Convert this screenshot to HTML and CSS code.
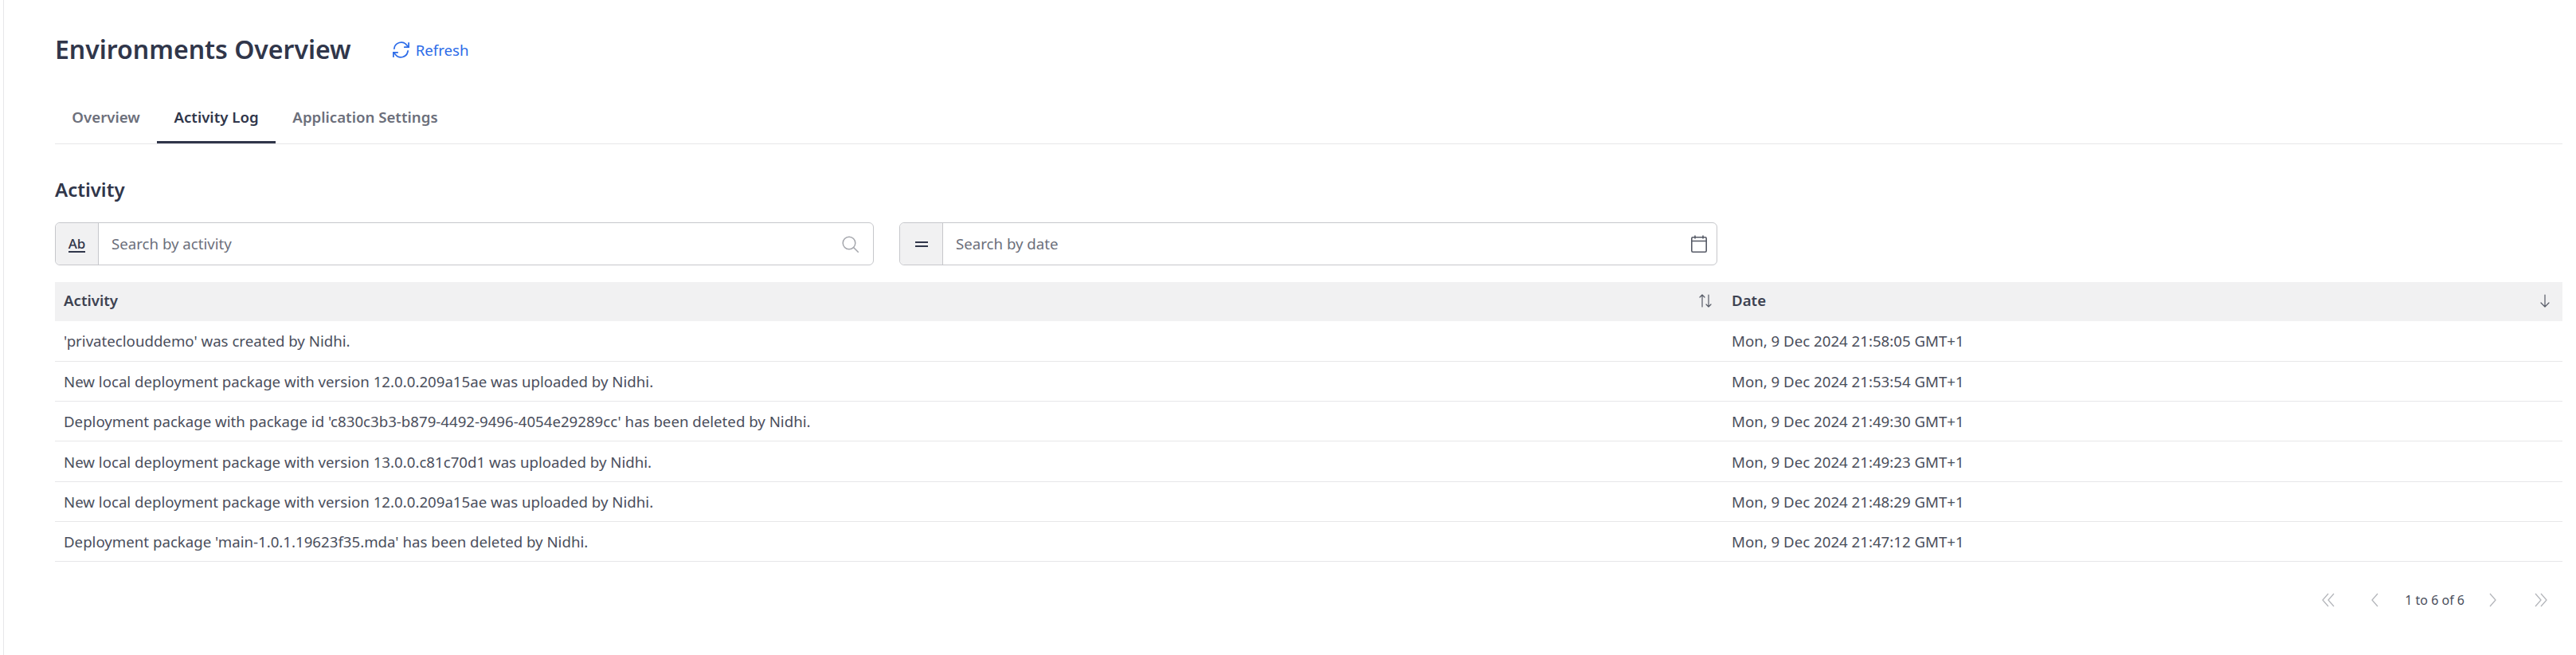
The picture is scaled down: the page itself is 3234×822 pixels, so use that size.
FILE: index.html
```html
<!DOCTYPE html>
<html>
<head>
    <title>Environments Overview</title>
    <link rel="stylesheet" href="styles.css">
</head>
<body>
    <div class="page">
        <div class="page-header">
            <h1>Environments Overview</h1>
            <a class="refresh">
                <svg width="23" height="23" viewBox="0 0 24 24" fill="none" stroke="#2b6be8" stroke-width="1.8" stroke-linecap="round" stroke-linejoin="round"><path d="M3 10.5A9.2 9.2 0 0 1 19.5 6L22 8.5"/><path d="M22 3v5.5h-5.5"/><path d="M21 13.5A9.2 9.2 0 0 1 4.5 18L2 15.5"/><path d="M2 21v-5.5h5.500"/></svg>
                Refresh
            </a>
        </div>

        <div class="tabs">
            <a class="tab">Overview</a>
            <a class="tab active">Activity Log</a>
            <a class="tab">Application Settings</a>
        </div>

        <h2>Activity</h2>

        <div class="filters">
            <div class="filter">
                <div class="filter-type"><span class="ab">Ab</span></div>
                <div class="filter-input">Search by activity</div>
                <svg class="search-icon" width="21" height="21" viewBox="0 0 21 21" fill="none" stroke="#a4a6ac" stroke-width="1.5" stroke-linecap="round"><circle cx="9" cy="9" r="7.800"/><path d="M14.500 14.500l5.800 5.800"/></svg>
            </div>
            <div class="filter date-filter">
                <div class="filter-type"><span class="equals"></span></div>
                <div class="filter-input">Search by date</div>
                <svg class="calendar-icon" width="20" height="22" viewBox="0 0 20 22" fill="none" stroke="#565a66" stroke-width="1.600"><rect x="0.800" y="2.800" width="18.400" height="18.400" rx="1.500"/><path d="M0.800 7.500h18.400M5 0.500v4M15 0.500v4"/></svg>
            </div>
        </div>

        <table class="log">
            <thead>
                <tr>
                    <th>
                        <div class="th-inner">Activity
                            <svg class="sort-icon" width="16" height="17" viewBox="0 0 16 17" fill="none" stroke="#565a66" stroke-width="1.200" stroke-linecap="round" stroke-linejoin="round"><path d="M4 16V1M1 4l3-3 3 3"/><path d="M12 1v15M9 13l3 3 3-3"/></svg>
                        </div>
                    </th>
                    <th>
                        <div class="th-inner">Date
                            <svg class="sort-icon down" width="12" height="17" viewBox="0 0 12 17" fill="none" stroke="#565a66" stroke-width="1.200" stroke-linecap="round" stroke-linejoin="round"><path d="M6 1v15M1 11l5 5 5-5"/></svg>
                        </div>
                    </th>
                </tr>
            </thead>
            <tbody>
                <tr><td>'privateclouddemo' was created by Nidhi.</td><td>Mon, 9 Dec 2024 21:58:05 GMT+1</td></tr>
                <tr><td>New local deployment package with version 12.0.0.209a15ae was uploaded by Nidhi.</td><td>Mon, 9 Dec 2024 21:53:54 GMT+1</td></tr>
                <tr><td>Deployment package with package id 'c830c3b3-b879-4492-9496-4054e29289cc' has been deleted by Nidhi.</td><td>Mon, 9 Dec 2024 21:49:30 GMT+1</td></tr>
                <tr><td>New local deployment package with version 13.0.0.c81c70d1 was uploaded by Nidhi.</td><td>Mon, 9 Dec 2024 21:49:23 GMT+1</td></tr>
                <tr><td>New local deployment package with version 12.0.0.209a15ae was uploaded by Nidhi.</td><td>Mon, 9 Dec 2024 21:48:29 GMT+1</td></tr>
                <tr><td>Deployment package 'main-1.0.1.19623f35.mda' has been deleted by Nidhi.</td><td>Mon, 9 Dec 2024 21:47:12 GMT+1</td></tr>
            </tbody>
        </table>

        <div class="pagination">
            <svg width="16" height="18" viewBox="0 0 16 18" fill="none" stroke="#b4b6bb" stroke-width="1.300"><path d="M8 1L1 9l7 8M15 1L8 9l7 8"/></svg>
            <svg class="prev" width="9" height="18" viewBox="0 0 9 18" fill="none" stroke="#b4b6bb" stroke-width="1.300"><path d="M8 1L1 9l7 8"/></svg>
            <span class="page-count">1 to 6 of 6</span>
            <svg width="9" height="18" viewBox="0 0 9 18" fill="none" stroke="#b4b6bb" stroke-width="1.300"><path d="M1 1l7 8-7 8"/></svg>
            <svg class="last" width="16" height="18" viewBox="0 0 16 18" fill="none" stroke="#b4b6bb" stroke-width="1.300"><path d="M1 1l7 8-7 8M8 1l7 8-7 8"/></svg>
        </div>
    </div>
</body>
</html>
```

FILE: styles.css
```css
/* Reset */
html, body, h1, h2 {
    margin: 0;
    padding: 0;
}

body {
    background-color: #fff;
    font-family: "Noto Sans", sans-serif;
    color: #30364a;
    font-size: 18.67px;
}

.page {
    box-sizing: border-box;
    height: 822px;
    margin-left: 4px;
    border-left: 1px solid #e7e7e9;
    padding: 0 17px 0 64px;
}

/* Header */
.page-header {
    display: flex;
    align-items: center;
    height: 124px;
}

h1 {
    font-size: 32px;
    font-weight: 600;
    line-height: 44px;
}

.refresh {
    display: flex;
    align-items: center;
    gap: 7px;
    margin-left: 51px;
    color: #2b6be8;
}

/* Tabs */
.tabs {
    display: flex;
    height: 57px;
    box-sizing: border-box;
    border-bottom: 1px solid #e7e7e9;
}

.tab {
    display: flex;
    align-items: center;
    height: 56px;
    box-sizing: border-box;
    padding: 0 21.33px 11px;
    font-weight: 600;
    color: #6c6f7b;
}

.tab.active {
    color: #30364a;
    border-bottom: 3px solid #30364a;
    padding-bottom: 8px;
}

h2 {
    margin-top: 37px;
    font-size: 24px;
    font-weight: 600;
    line-height: 40px;
}

/* Filters */
.filters {
    display: flex;
    gap: 32px;
    margin-top: 21px;
}

.filter {
    display: flex;
    align-items: center;
    box-sizing: border-box;
    width: 1028px;
    height: 54px;
    border: 1px solid #c6c7cb;
    border-radius: 6px;
}

.date-filter {
    width: 1027px;
}

.filter-type {
    display: flex;
    align-items: center;
    justify-content: center;
    align-self: stretch;
    box-sizing: border-box;
    width: 54px;
    background-color: #f1f1f2;
    border-right: 1px solid #c6c7cb;
    border-radius: 6px 0 0 6px;
}

.ab {
    font-size: 17px;
    font-weight: 500;
    line-height: 19px;
    border-bottom: 2px solid #30364a;
}

.equals {
    display: block;
    width: 16px;
    height: 3px;
    border-top: 2.5px solid #30364a;
    border-bottom: 2.5px solid #30364a;
}

.filter-input {
    flex: 1;
    padding: 0 0 2px 16px;
    color: #6c6f7b;
}

.search-icon {
    margin-right: 18px;
}

.calendar-icon {
    margin-right: 12px;
}

/* Table */
.log {
    width: 100%;
    margin-top: 21px;
    border-collapse: collapse;
    table-layout: fixed;
}

.log th {
    box-sizing: border-box;
    height: 49px;
    padding: 0 11px 5px;
    background-color: #f1f1f2;
    font-weight: 600;
    font-size: 18.67px;
    text-align: left;
    color: #3d4251;
}

.log th:first-child {
    width: 2094px;
}

.th-inner {
    display: flex;
    align-items: center;
    justify-content: space-between;
}

.sort-icon {
    margin: 2px 3px 0 0;
}

.sort-icon.down {
    margin-right: 5px;
}

.log td {
    height: 50.33px;
    box-sizing: border-box;
    padding: 0 11px;
    border-bottom: 1.5px solid #e7e7e9;
    color: #4a4e5c;
}

/* Pagination */
.pagination {
    display: flex;
    align-items: center;
    justify-content: flex-end;
    height: 96px;
    padding-right: 19px;
}

.prev {
    margin-left: 46px;
}

.page-count {
    margin: 0 31px 0 33px;
    font-size: 16px;
    color: #4a4e5c;
}

.last {
    margin-left: 48px;
}
```
